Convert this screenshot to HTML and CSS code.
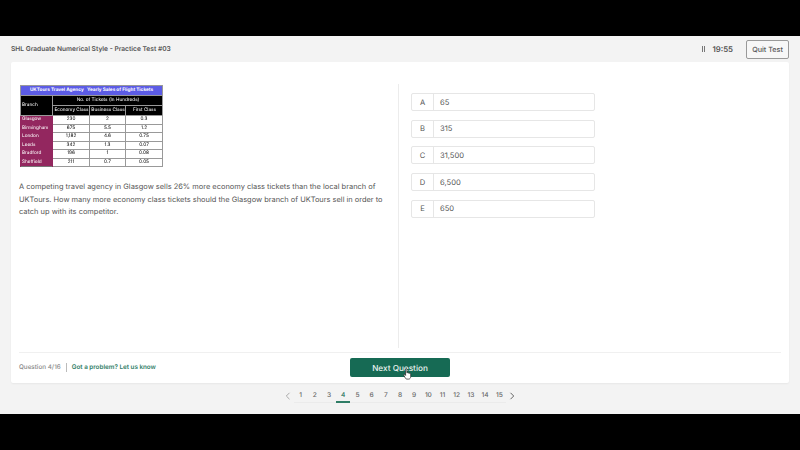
FILE: index.html
```html
<!DOCTYPE html>
<html lang="en">
<head>
    <meta charset="UTF-8">
    <title>SHL Graduate Numerical Style - Practice Test #03</title>
    <link rel="stylesheet" href="styles.css">
</head>
<body>
    <div class="app">
        <header class="topbar">
            <div class="test-title">SHL Graduate Numerical Style - Practice Test #03</div>
            <div class="timer">
                <span class="pause"><i></i><i></i></span>
                <span>19:55</span>
            </div>
            <button class="quit">Quit Test</button>
        </header>

        <main class="card">
            <div class="panes">
                <section class="question">
                    <table class="sales">
                        <colgroup>
                            <col class="col-branch">
                            <col class="col-economy">
                            <col class="col-business">
                            <col class="col-first">
                        </colgroup>
                        <tr>
                            <th class="sales-title" colspan="4">UKTours Travel Agency &nbsp; Yearly Sales of Flight Tickets</th>
                        </tr>
                        <tr class="head-row">
                            <th class="head" rowspan="2">Branch</th>
                            <th class="head center" colspan="3">No. of Tickets (In Hundreds)</th>
                        </tr>
                        <tr class="head-row">
                            <th class="head center">Economy Class</th>
                            <th class="head center">Business Class</th>
                            <th class="head center">First Class</th>
                        </tr>
                        <tr><td class="branch">Glasgow</td><td>230</td><td>2</td><td>0.3</td></tr>
                        <tr><td class="branch">Birmingham</td><td>675</td><td>5.5</td><td>1.2</td></tr>
                        <tr><td class="branch">London</td><td>1,182</td><td>4.6</td><td>0.75</td></tr>
                        <tr><td class="branch">Leeds</td><td>342</td><td>1.3</td><td>0.07</td></tr>
                        <tr><td class="branch">Bradford</td><td>196</td><td>1</td><td>0.08</td></tr>
                        <tr><td class="branch">Sheffield</td><td>211</td><td>0.7</td><td>0.05</td></tr>
                    </table>
                    <p class="question-text">A competing travel agency in Glasgow sells 26% more economy class tickets than the local branch of UKTours. How many more economy class tickets should the Glasgow branch of UKTours sell in order to catch up with its competitor.</p>
                </section>

                <section class="answers">
                    <div class="answer"><span class="letter">A</span><span class="value">65</span></div>
                    <div class="answer"><span class="letter">B</span><span class="value">315</span></div>
                    <div class="answer"><span class="letter">C</span><span class="value">31,500</span></div>
                    <div class="answer"><span class="letter">D</span><span class="value">6,500</span></div>
                    <div class="answer"><span class="letter">E</span><span class="value">650</span></div>
                </section>
            </div>

            <footer class="card-footer">
                <div class="progress">
                    <span class="count">Question 4/16</span>
                    <a href="#" class="problem">Got a problem? Let us know</a>
                </div>
                <button class="next">Next Question</button>
            </footer>
        </main>

        <nav class="pager">
            <svg class="chev" width="6" height="8" viewBox="0 0 6 8"><path d="M4.500 .8 1.300 4l3.200 3.200" fill="none" stroke="#a8a8a8" stroke-width="1"/></svg>
            <div class="pages">
                <a>1</a><a>2</a><a>3</a><a class="current">4</a><a>5</a>
                <a>6</a><a>7</a><a>8</a><a>9</a><a>10</a>
                <a>11</a><a>12</a><a>13</a><a>14</a><a>15</a>
            </div>
            <svg class="chev" width="6" height="8" viewBox="0 0 6 8"><path d="M1.500 .8 4.700 4 1.500 7.200" fill="none" stroke="#666" stroke-width="1"/></svg>
        </nav>

        <!-- mouse pointer caught in the capture -->
        <svg class="cursor" width="9" height="12" viewBox="0 0 9 12">
            <path d="M2.600 1.200c0-.8 1.300-.8 1.300 0v3.600l.3-.1c.5-.2 1 0 1.100.3.500-.2 1-.1 1.200.3.500-.2 1.100 0 1.200.5v2.700c0 1.400-.8 2.600-2 2.600H3.900c-.7 0-1.100-.3-1.500-.9L.7 7c-.3-.6.400-1.100.9-.6l1 1z" fill="#fff" stroke="#222" stroke-width=".7"/>
        </svg>
    </div>
</body>
</html>
```

FILE: styles.css
```css
* {
    margin: 0;
    padding: 0;
    box-sizing: border-box;
    font-family: Inter, 'Liberation Sans', sans-serif;
    text-rendering: geometricPrecision;
}

html, body {
    width: 800px;
    height: 450px;
    overflow: hidden;
    background-color: #000;
}

body {
    padding: 36px 0;
}

.app {
    position: relative;
    height: 378px;
    background-color: #f3f3f3;
    display: flex;
    flex-direction: column;
    padding: 0 11px;
    filter: blur(0.3px);
}

.topbar {
    height: 26px;
    display: flex;
    align-items: center;
}

.test-title {
    flex-grow: 1;
    font-size: 6.650px;
    font-weight: 600;
    color: #555;
}

.timer {
    display: flex;
    align-items: center;
    gap: 7px;
    margin-right: 13px;
    font-size: 7.800px;
    font-weight: 600;
    color: #555;
}

.pause {
    display: flex;
    gap: 1.500px;
}

.pause i {
    width: 1.200px;
    height: 6px;
    background-color: #777;
}

.quit {
    width: 43px;
    height: 19px;
    background-color: #f7f7f7;
    border: 1px solid #999;
    border-radius: 2px;
    font-size: 7.200px;
    font-weight: 500;
    color: #555;
}

.card {
    height: 321px;
    background-color: #fff;
    border-radius: 2px;
    display: flex;
    flex-direction: column;
    box-shadow: 0 1px 2px rgba(0, 0, 0, 0.05);
}

.panes {
    height: 291px;
    display: flex;
    padding-top: 22px;
    border-bottom: 1px solid #f0f0f0;
    margin: 0 8px;
}

.question {
    width: 380px;
    border-right: 1px solid #ececec;
    padding-top: 1px;
    margin-bottom: 4px;
}

.sales {
    width: 142px;
    height: 82px;
    margin-left: 1px;
    border-collapse: collapse;
    table-layout: fixed;
    font-size: 4.700px;
    filter: blur(0.3px);
    border: 1px solid #777;
}

.col-branch {
    width: 32px;
}

.col-economy {
    width: 37px;
}

.col-business {
    width: 36px;
}

.col-first {
    width: 37px;
}

.sales th, .sales td {
    font-weight: 400;
    border: 1px solid #999;
    text-align: center;
    line-height: 1;
    overflow: hidden;
    white-space: nowrap;
}

.sales .sales-title {
    height: 10px;
    background-color: #5c5ce6;
    color: #fff;
    font-weight: 700;
    font-size: 4.700px;
}

.head-row {
    height: 10px;
}

.sales .head {
    background-color: #000;
    color: #fff;
    text-align: left;
    padding-left: 1px;
}

.sales .head.center {
    text-align: center;
}

.sales .branch {
    background-color: #93275f;
    color: #fff;
    text-align: left;
    padding-left: 1px;
    border-color: #93275f;
    border-bottom: 1px dotted #ddd;
}

.question-text {
    margin-top: 14px;
    width: 375px;
    font-size: 7.450px;
    line-height: 12.500px;
    color: #555;
}

.answers {
    padding: 9px 0 0 12px;
    display: flex;
    flex-direction: column;
    gap: 8.700px;
}

.answer {
    width: 184px;
    height: 18px;
    display: flex;
    align-items: center;
    border: 1px solid #e6e6e6;
    border-radius: 2px;
    font-size: 7.600px;
    color: #555;
}

.letter {
    width: 22px;
    height: 100%;
    display: flex;
    align-items: center;
    justify-content: center;
    border-right: 1px solid #e6e6e6;
}

.value {
    padding-left: 6px;
}

.card-footer {
    position: relative;
    flex-grow: 1;
    display: flex;
    align-items: center;
    justify-content: center;
    padding-bottom: 1px;
}

.progress {
    position: absolute;
    left: 8px;
    top: 10px;
    display: flex;
    align-items: center;
    font-size: 6.300px;
    line-height: 9px;
}

.count {
    color: #888;
    font-weight: 500;
    padding-right: 5px;
    border-right: 1px solid #bbb;
}

.problem {
    color: #2f7d66;
    font-weight: 600;
    text-decoration: none;
    padding-left: 5px;
}

.next {
    width: 100px;
    height: 19px;
    background-color: #166a54;
    border: none;
    border-radius: 2px;
    color: #e9f2ef;
    font-size: 8.200px;
    font-weight: 500;
}

.pager {
    flex-grow: 1;
    display: flex;
    align-items: center;
    justify-content: center;
    gap: 2.500px;
    padding-bottom: 5px;
}

.pages {
    display: flex;
    border-bottom: 1px solid #ebebeb;
}

.pages a {
    width: 14.200px;
    height: 13px;
    text-align: center;
    font-size: 6.600px;
    font-weight: 500;
    line-height: 12px;
    color: #666;
}

.pages .current {
    color: #166a54;
    border-bottom: 2px solid #2f7d66;
    height: 14px;
    margin-bottom: -1px;
}

.cursor {
    position: absolute;
    left: 403px;
    top: 332px;
}
```
